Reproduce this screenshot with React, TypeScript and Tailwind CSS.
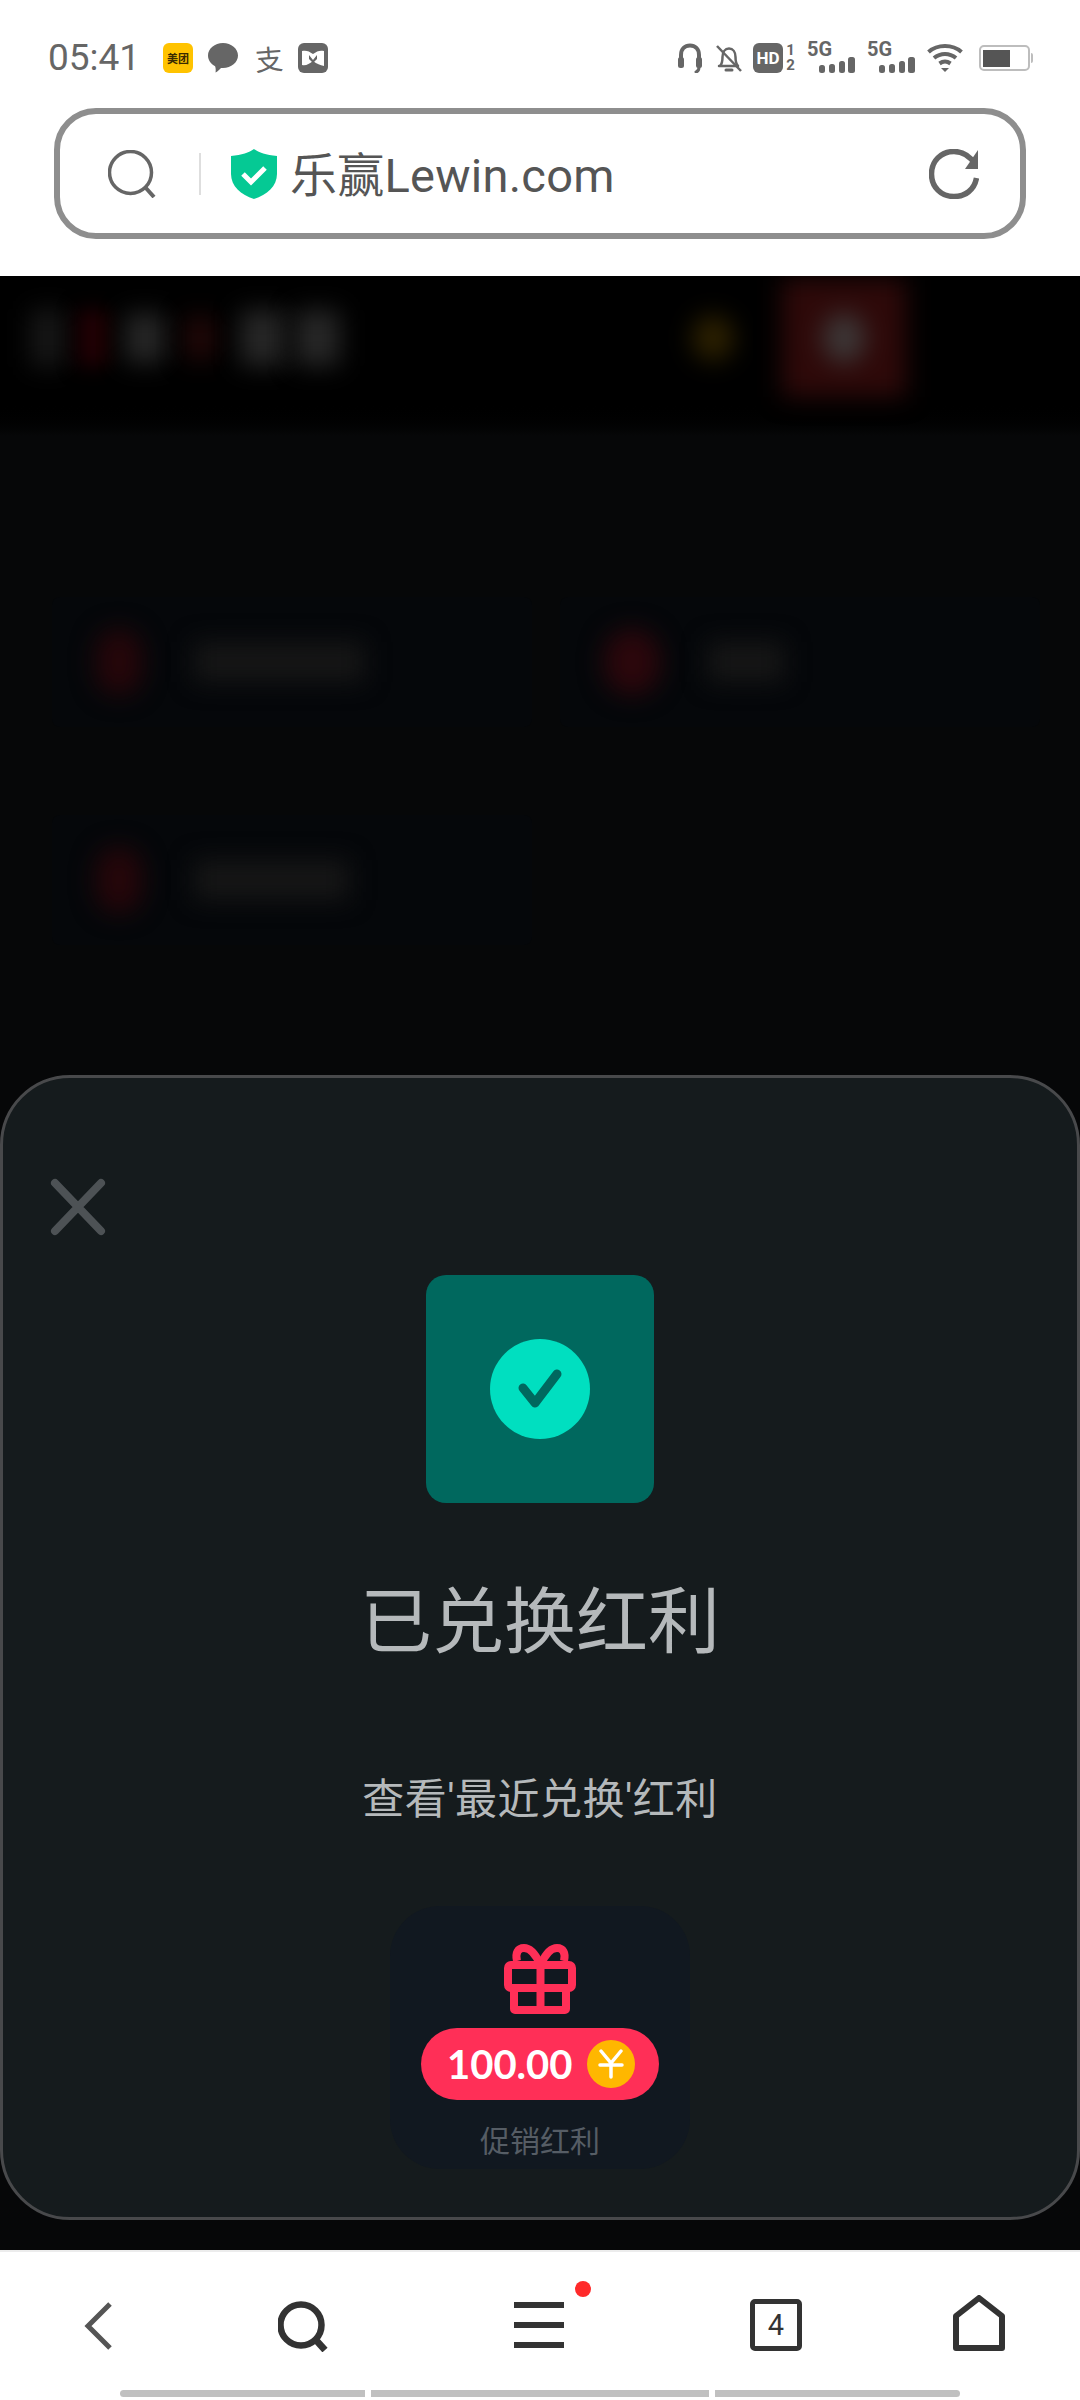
const cjk = "font-['Roboto','Noto_Sans_CJK_SC',sans-serif]";

function StatusLeft() {
  return (
    <div className="flex items-center">
      <span className="w-[163px] pl-[48px] text-[37px] leading-[30px] text-[#666] font-['Roboto',sans-serif] whitespace-nowrap">05:41</span>
      <div className="flex items-center">
        <div className="flex h-[30px] w-[30px] items-center justify-center rounded-[6px] bg-[#ffc300] font-['Noto_Sans_CJK_SC',sans-serif] text-[11px] leading-none font-bold text-[#3a2a00] whitespace-nowrap">美团</div>
        <svg className="ml-[15px]" width="30" height="30" viewBox="0 0 30 30">
          <path d="M15 0C23.300 0 30 5.600 30 12.500C30 19.400 23.300 25 15 25C14.300 25 13.700 25 13 24.900C11.500 26.800 9.500 28.400 7.500 29.500C7.900 27.500 7.800 25 7.100 23.200C2.800 21 0 17 0 12.500C0 5.600 6.700 0 15 0Z" fill="#666" />
        </svg>
        <span className="ml-[17px] w-[28px] rotate-[-4deg] text-center font-['Noto_Sans_CJK_SC',sans-serif] text-[28px] leading-[30px] text-[#666]">支</span>
        <svg className="ml-[15px]" width="30" height="30" viewBox="0 0 30 30">
          <rect width="30" height="30" rx="6" fill="#666" />
          <path d="M4 8C8 7 11 8 15 11C19 8 22 7 26 8V23C22 22 19 21 15 18C11 21 8 23 4 22Z" fill="#fff" />
          <path d="M11 12L15 17L19 12L19 16L15 20L11 16Z" fill="#666" />
        </svg>
      </div>
    </div>
  );
}

function SignalBars() {
  return (
    <div className="relative h-[30px] w-[48px]">
      <span className="absolute left-0 top-[-4px] font-['Roboto',sans-serif] text-[20px] leading-[20px] font-bold text-[#666]">5G</span>
      <svg className="absolute left-[12px] top-0" width="36" height="30" viewBox="0 0 36 30">
        <rect x="0" y="22" width="6" height="8" rx="2.500" fill="#666" />
        <rect x="10" y="21" width="6" height="9" rx="2.500" fill="#666" />
        <rect x="20" y="18" width="6" height="12" rx="2.500" fill="#666" />
        <rect x="29" y="14" width="7" height="16" rx="2.500" fill="#666" />
      </svg>
    </div>
  );
}

function StatusRight() {
  return (
    <div className="flex h-[30px] items-center pr-[47px]">
      <svg width="24" height="30" viewBox="0 0 24 30" fill="none">
        <path d="M3 17V12C3 6 7 2.500 12 2.500C17 2.500 21 6 21 12V17" stroke="#666" strokeWidth="4" />
        <rect x="0" y="14" width="6" height="11" rx="2.500" fill="#666" />
        <rect x="18" y="14" width="6" height="11" rx="2.500" fill="#666" />
        <path d="M21 24C21 27 20 28.500 18 29" stroke="#666" strokeWidth="3" strokeLinecap="round" />
      </svg>
      <svg className="ml-[14px]" width="26" height="30" viewBox="0 0 26 30" fill="none">
        <path d="M4 23C6 21 6.500 18 6.500 14C6.500 9 9 5.500 13 5.500C17 5.500 19.500 9 19.500 14C19.500 18 20 21 22 23H3Z" stroke="#666" strokeWidth="2.500" strokeLinejoin="round" />
        <path d="M10 27H16" stroke="#666" strokeWidth="3" strokeLinecap="round" />
        <path d="M1 3L25 28" stroke="#666" strokeWidth="2.500" />
      </svg>
      <div className="ml-[11px] flex h-[30px] w-[30px] items-center justify-center rounded-[6px] bg-[#666] font-['Roboto',sans-serif] text-[17px] leading-none font-bold text-white">HD</div>
      <div className="ml-[2px] flex w-[11px] flex-col items-center font-['Roboto',sans-serif] text-[15px] leading-[15px] font-bold text-[#666]">
        <span>1</span>
        <span>2</span>
      </div>
      <div className="ml-[11px]"><SignalBars /></div>
      <div className="ml-[12px]"><SignalBars /></div>
      <svg className="ml-[12px]" width="36" height="30" viewBox="0 0 36 30" fill="none">
        <path d="M1.500 9C10.500 1 25.500 1 34.500 9" stroke="#666" strokeWidth="4" />
        <path d="M7 15C13.500 9.500 22.500 9.500 29 15" stroke="#666" strokeWidth="4" />
        <path d="M12.500 20.500C16 18 20 18 23.500 20.500" stroke="#666" strokeWidth="4" />
        <path d="M14 25H22L18 29Z" fill="#666" />
      </svg>
      <div className="ml-[16px] flex h-[26px] w-[51px] items-center rounded-[5px] border-2 border-[#bdbdbd] pl-[2px]">
        <div className="h-[17px] w-[27px] bg-[#555]" />
      </div>
      <div className="ml-[1px] h-[10px] w-[2px] rounded-r-sm bg-[#bdbdbd]" />
    </div>
  );
}

function UrlBar() {
  return (
    <div className="mx-[54px] flex h-[131px] items-center rounded-[42px] border-[6px] border-[#8e8e8e] bg-white">
      <svg className="ml-[48px]" width="48" height="48" viewBox="0 0 48 48" fill="none">
        <circle cx="22.500" cy="22.500" r="21" stroke="#666" strokeWidth="3.500" />
        <path d="M37 37L46 47" stroke="#666" strokeWidth="4" />
      </svg>
      <div className="ml-[43px] h-[42px] w-[2px] bg-[#dedede]" />
      <svg className="ml-[30px]" width="46" height="50" viewBox="0 0 46 50">
        <path d="M23 0C28 3.500 35 6 46 7V25C46 37 36 46 23 50C10 46 0 37 0 25V7C11 6 18 3.500 23 0Z" fill="#05c994" />
        <path d="M12 25L20 33L34 19" fill="none" stroke="#fff" strokeWidth="5" />
      </svg>
      <span className={`ml-[13px] mt-[3px] flex-1 text-[47px] tracking-[0.25px] leading-none text-[#555] whitespace-nowrap ${cjk}`}>乐赢Lewin.com</span>
      <svg className="mr-[41px]" width="50" height="50" viewBox="0 0 50 50" fill="none">
        <path d="M47.500 29C45.500 41 36 47.500 25 47.500C12 47.500 2.500 38 2.500 25C2.500 12 12 2.500 25 2.500C33 2.500 40 6 46 15" stroke="#666" strokeWidth="5.500" />
        <path d="M49 1V20H36Z" fill="#666" />
      </svg>
    </div>
  );
}

function BlurredBackground() {
  return (
    <div className="flex h-full flex-col bg-[#060708]">
      <div className="flex h-[124px] items-center bg-black pl-[30px]">
        <div className="h-[58px] w-[36px] rounded bg-[#161616] blur-[12px]" />
        <div className="ml-[12px] h-[56px] w-[30px] bg-[#220004] blur-[10px]" />
        <div className="ml-[17px] h-[50px] w-[40px] rounded bg-[#262626] blur-[12px]" />
        <div className="ml-[20px] h-[44px] w-[30px] rounded bg-[#220808] blur-[12px]" />
        <div className="ml-[25px] h-[56px] w-[45px] rounded bg-[#262626] blur-[12px]" />
        <div className="ml-[10px] h-[56px] w-[45px] rounded bg-[#262626] blur-[12px]" />
        <div className="ml-[352px] h-[46px] w-[42px] rounded-full bg-[#2c2000] blur-[12px]" />
        <div className="ml-[48px] flex h-[118px] w-[124px] items-center justify-center bg-[#2e0909] blur-[12px]">
          <div className="h-[50px] w-[42px] rounded-full bg-[#3c3636]" />
        </div>
      </div>
      <div className="h-[36px] bg-linear-to-b from-black to-[#060708]" />
      <div className="grid grid-cols-2 gap-x-[28px] gap-y-[88px] pl-[52px] pr-[40px] pt-[161px]">
        <BlurTile textWidth="w-[170px]" />
        <BlurTile textWidth="w-[76px]" big />
        <BlurTile textWidth="w-[155px]" />
      </div>
    </div>
  );
}

function BlurTile({ textWidth, big }: { textWidth: string; big?: boolean }) {
  return (
    <div className="flex h-[130px] items-center rounded-lg bg-[#05070a] pl-[44px]">
      <div className={`h-[66px] ${big ? "w-[56px] bg-[#2c070c]" : "w-[46px] bg-[#26060a]"} rounded-full blur-[12px]`} />
      <div className={`${big ? "ml-[48px]" : "ml-[52px]"} h-[40px] ${textWidth} bg-[#161616] blur-[12px]`} />
    </div>
  );
}

function GiftIcon() {
  return (
    <svg width="72" height="70" viewBox="0 0 72 70" fill="none" stroke="#ff2f57" strokeWidth="8" strokeLinejoin="round">
      <rect x="4" y="21" width="64" height="23" rx="3" />
      <rect x="10" y="44" width="52" height="22" rx="1" />
      <path d="M36.500 20V67" />
      <path d="M36 20C31 9 26 4 20 4C14 4 11 9 13 17" />
      <path d="M37 20C42 9 47 4 53 4C59 4 62 9 60 17" />
    </svg>
  );
}

function RewardDialog() {
  return (
    <div className="absolute inset-x-0 top-[799px] flex h-[1145px] flex-col items-center rounded-[70px] border-[3px] border-[#48494b] bg-[#151b1d]">
      <svg className="absolute left-[47px] top-[100px]" width="56" height="58" viewBox="0 0 56 58" fill="none">
        <path d="M5 5L51 53M51 5L5 53" stroke="#4d5255" strokeWidth="8" strokeLinecap="round" />
      </svg>
      <div className="mt-[197px] flex h-[228px] w-[228px] items-center justify-center rounded-[20px] bg-[#00685e]">
        <svg width="100" height="100" viewBox="0 0 100 100" fill="none">
          <circle cx="50" cy="50" r="50" fill="#00dfc0" />
          <path d="M33 49L45 64L67 35" stroke="#00685e" strokeWidth="9" strokeLinecap="round" strokeLinejoin="round" />
        </svg>
      </div>
      <h2 className={`mt-[78px] text-[72px] leading-[84px] font-normal text-[#b5b9bb] ${cjk}`}>已兑换红利</h2>
      <p className={`mt-[111px] text-[42px] tracking-[0.5px] leading-[48px] text-[#b5b9bb] ${cjk}`}>查看'最近兑换'红利</p>
      <div className="mt-[82px] flex h-[263px] w-[300px] flex-col items-center rounded-[50px] bg-[#111820] pt-[38px]">
        <GiftIcon />
        <div className="mt-[14px] flex h-[72px] w-[238px] items-center rounded-full bg-[#ff2f57] pl-[26px]">
          <span className="w-[126px] font-['Lato',sans-serif] text-[40px] leading-none font-bold text-white whitespace-nowrap">100.00</span>
          <div className="ml-[14px] flex h-[48px] w-[48px] items-center justify-center rounded-full bg-[#ffb700]">
            <svg width="26" height="30" viewBox="0 0 26 30" fill="none" stroke="#fff" strokeWidth="3.500" strokeLinecap="round">
              <path d="M3 2L13 14L23 2M13 14V28M2 16H24" />
            </svg>
          </div>
        </div>
        <span className={`mt-[22px] text-[30px] leading-[40px] text-[#565d65] ${cjk}`}>促销红利</span>
      </div>
    </div>
  );
}

function BottomNav() {
  return (
    <div className="flex h-[150px] flex-col border-t-2 border-[#ececec] bg-white">
      <div className="relative mt-[28px] h-[72px]">
        <div className="flex h-full items-start">
          <svg className="ml-[84px] mt-[22px]" width="30" height="48" viewBox="0 0 30 48" fill="none">
            <path d="M26 2L4 24L26 46" stroke="#555" strokeWidth="5" />
          </svg>
          <svg className="ml-[164px] mt-[20px]" width="50" height="52" viewBox="0 0 50 52" fill="none">
            <circle cx="23" cy="25" r="20.500" stroke="#333" strokeWidth="6.500" />
            <path d="M37 39L47 50" stroke="#333" strokeWidth="7" />
          </svg>
          <div className="relative ml-[186px] mt-[22px] flex h-[46px] w-[50px] flex-col justify-between">
            <div className="h-[6px] bg-[#333]" />
            <div className="h-[6px] bg-[#333]" />
            <div className="h-[6px] bg-[#333]" />
            <div className="absolute left-[61px] top-[-21px] h-[16px] w-[16px] rounded-full bg-[#ff2a2a]" />
          </div>
          <div className="ml-[186px] mt-[19px] flex h-[52px] w-[52px] items-center justify-center rounded-[5px] border-[5px] border-[#333] font-['Roboto',sans-serif] text-[29px] leading-none text-[#333]">4</div>
          <svg className="ml-[151px] mt-[15px]" width="52" height="56" viewBox="0 0 52 56" fill="none">
            <path d="M26 3L49 21V53H3V21Z" stroke="#333" strokeWidth="6" strokeLinejoin="round" />
          </svg>
        </div>
      </div>
      <div className="mt-[38px] flex h-[7px] gap-[6px] pl-[120px]">
        <div className="w-[245px] rounded-l-full bg-[#c0c0c0]" />
        <div className="w-[338px] bg-[#c0c0c0]" />
        <div className="w-[245px] rounded-r-full bg-[#c0c0c0]" />
      </div>
    </div>
  );
}

export default function App() {
  return (
    <div className="flex h-[2400px] w-[1080px] flex-col overflow-hidden bg-white">
      <header className="h-[276px] shrink-0 bg-white">
        <div className="flex h-[108px] items-start justify-between pt-[43px]">
          <StatusLeft />
          <StatusRight />
        </div>
        <UrlBar />
      </header>
      <main className="relative flex-1 overflow-hidden">
        <BlurredBackground />
        <RewardDialog />
      </main>
      <BottomNav />
    </div>
  );
}
